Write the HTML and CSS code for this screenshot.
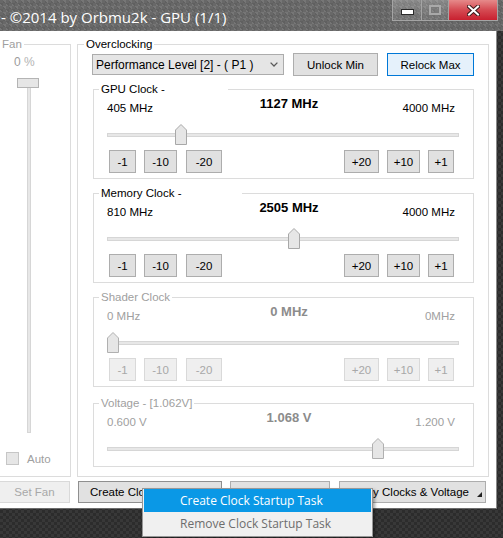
FILE: index.html
```html
<!DOCTYPE html>
<html>
<head>
<meta charset="utf-8">
<link rel="stylesheet" href="styles.css">
</head>
<body>
<div class="window">
  <div class="titlebar">
    <div class="title">- ©2014 by Orbmu2k - GPU (1/1)</div>
    <div class="caps">
      <div class="cap cap-min"><svg width="13" height="6" viewBox="0 0 13 6"><rect x="0.5" y="0.5" width="12" height="5" fill="#fff" stroke="#2a2a2a"/></svg></div>
      <div class="cap cap-max"><svg width="12" height="10" viewBox="0 0 12 10"><rect x="1" y="1" width="10" height="8" fill="none" stroke="#a9a9a9" stroke-width="2"/><rect x="2.5" y="2.5" width="7" height="5" fill="none" stroke="#7a7a7a" stroke-width="1"/></svg></div>
      <div class="cap cap-close"><svg width="13" height="11" viewBox="0 0 13 11"><path d="M2 1.5 L11 9.5 M11 1.5 L2 9.5" stroke="#3a1a1a" stroke-width="4" stroke-linecap="square"/><path d="M2 1.5 L11 9.5 M11 1.5 L2 9.5" stroke="#fff" stroke-width="2" stroke-linecap="square"/></svg></div>
    </div>
  </div>
  <div class="client">
    <div class="main">
      <fieldset class="group fan disabled">
        <legend class="lg-fan">Fan</legend>
        <div class="fan-body">
          <div class="fan-pct">0 <span class="pct">%</span></div>
          <div class="vslider">
            <div class="vtrack"></div>
            <div class="vthumb"></div>
          </div>
          <div class="auto-row">
            <span class="checkbox"></span>
            <span class="auto-label">Auto</span>
          </div>
        </div>
      </fieldset>
      <fieldset class="group oc">
        <legend class="lg-oc">Overclocking</legend>
        <div class="oc-body">
          <div class="toprow">
            <div class="select">
              <span class="select-text">Performance Level [2] - ( P1 )</span>
              <svg class="chev" width="8" height="5" viewBox="0 0 8 5"><path d="M0.6 0.6 L4 4 L7.4 0.6" stroke="#5a5a5a" fill="none" stroke-width="1.3"/></svg>
            </div>
            <button class="btn btn-unlock">Unlock Min</button>
            <button class="btn btn-relock">Relock Max</button>
          </div>

          <fieldset class="group clock first">
            <legend class="lg-gpu">GPU Clock -</legend>
            <div class="clock-body">
              <div class="values">
                <span class="val-min">405 MHz</span>
                <span class="val-cur">1127 MHz</span>
                <span class="val-max">4000 MHz</span>
              </div>
              <div class="slider">
                <div class="track"></div>
                <div class="rail"><svg class="thumb" style="left:20.08%" width="12" height="21" viewBox="0 0 12 21"><path d="M0.5 20.5 V6 L6 0.5 L11.5 6 V20.5 Z" fill="#e6e6e6" stroke="#a8a8a8"/></svg></div>
              </div>
              <div class="btnrow">
                <button class="btn b-m1">-1</button>
                <button class="btn b-m10">-10</button>
                <button class="btn b-m20">-20</button>
                <button class="btn b-p20">+20</button>
                <button class="btn b-p10">+10</button>
                <button class="btn b-p1">+1</button>
              </div>
            </div>
          </fieldset>

          <fieldset class="group clock">
            <legend class="lg-mem">Memory Clock -</legend>
            <div class="clock-body">
              <div class="values">
                <span class="val-min">810 MHz</span>
                <span class="val-cur">2505 MHz</span>
                <span class="val-max">4000 MHz</span>
              </div>
              <div class="slider">
                <div class="track"></div>
                <div class="rail"><svg class="thumb" style="left:53.13%" width="12" height="21" viewBox="0 0 12 21"><path d="M0.5 20.5 V6 L6 0.5 L11.5 6 V20.5 Z" fill="#e6e6e6" stroke="#a8a8a8"/></svg></div>
              </div>
              <div class="btnrow">
                <button class="btn b-m1">-1</button>
                <button class="btn b-m10">-10</button>
                <button class="btn b-m20">-20</button>
                <button class="btn b-p20">+20</button>
                <button class="btn b-p10">+10</button>
                <button class="btn b-p1">+1</button>
              </div>
            </div>
          </fieldset>

          <fieldset class="group clock disabled">
            <legend class="lg-shader">Shader Clock</legend>
            <div class="clock-body">
              <div class="values">
                <span class="val-min">0 MHz</span>
                <span class="val-cur">0 MHz</span>
                <span class="val-max">0MHz</span>
              </div>
              <div class="slider">
                <div class="track"></div>
                <div class="rail"><svg class="thumb" style="left:0%" width="12" height="21" viewBox="0 0 12 21"><path d="M0.5 20.5 V6 L6 0.5 L11.5 6 V20.5 Z" fill="#e6e6e6" stroke="#b0b0b0"/></svg></div>
              </div>
              <div class="btnrow">
                <button class="btn b-m1">-1</button>
                <button class="btn b-m10">-10</button>
                <button class="btn b-m20">-20</button>
                <button class="btn b-p20">+20</button>
                <button class="btn b-p10">+10</button>
                <button class="btn b-p1">+1</button>
              </div>
            </div>
          </fieldset>

          <fieldset class="group clock voltage disabled">
            <legend class="lg-volt">Voltage - [1.062V]</legend>
            <div class="clock-body">
              <div class="values">
                <span class="val-min">0.600 V</span>
                <span class="val-cur">1.068 V</span>
                <span class="val-max">1.200 V</span>
              </div>
              <div class="slider">
                <div class="track"></div>
                <div class="rail"><svg class="thumb" style="left:78%" width="12" height="21" viewBox="0 0 12 21"><path d="M0.5 20.5 V6 L6 0.5 L11.5 6 V20.5 Z" fill="#e6e6e6" stroke="#b0b0b0"/></svg></div>
              </div>
            </div>
          </fieldset>
        </div>
      </fieldset>
    </div>
    <div class="actions">
      <button class="btn act-fan" disabled>Set Fan</button>
      <button class="btn act-create">Create Clocks Shortcut</button>
      <button class="btn act-mid">Restore Defaults</button>
      <button class="btn act-apply"><span>Apply Clocks &amp; Voltage</span><svg class="grip" width="5" height="5" viewBox="0 0 5 5"><path d="M5 0 V5 H0 Z" fill="#222"/></svg></button>
    </div>
  </div>
</div>
<div class="menu">
  <div class="menu-item active">Create Clock Startup Task</div>
  <div class="menu-item">Remove Clock Startup Task</div>
</div>
</body>
</html>
```

FILE: styles.css
```css
* { box-sizing: border-box; }
html, body { margin: 0; padding: 0; }
body {
  width: 503px;
  height: 538px;
  overflow: hidden;
  position: relative;
  font-family: "Liberation Sans", Arial, sans-serif;
  font-size: 11.5px;
  color: #000;
  background-color: #2c2c2c;
  background-image:
    linear-gradient(45deg, rgba(255,255,255,.06) 25%, transparent 25%, transparent 75%, rgba(255,255,255,.06) 75%),
    linear-gradient(45deg, rgba(255,255,255,.06) 25%, transparent 25%, transparent 75%, rgba(255,255,255,.06) 75%);
  background-size: 6px 6px;
  background-position: 0 0, 3px 3px;
}

/* title bar */
.titlebar {
  height: 31px;
  display: flex;
  align-items: flex-start;
  background-color: #686868;
  background-image:
    linear-gradient(45deg, rgba(255,255,255,.09) 25%, transparent 25%, transparent 75%, rgba(255,255,255,.09) 75%),
    linear-gradient(45deg, rgba(0,0,0,.08) 25%, transparent 25%, transparent 75%, rgba(0,0,0,.08) 75%);
  background-size: 6px 6px;
  background-position: 0 0, 3px 3px;
}
.title {
  font-family: "Open Sans", "Noto Sans", sans-serif;
  font-size: 15px;
  line-height: 20px;
  color: #fff;
  padding: 7px 0 0 1px;
  white-space: nowrap;
}
.caps {
  margin-left: auto;
  margin-right: 5px;
  display: flex;
  height: 21px;
  border: 1px solid #a4a4a4;
  border-top: 0;
}
.cap {
  height: 20px;
  display: flex;
  align-items: center;
  justify-content: center;
}
.cap-min {
  width: 29px;
  background: linear-gradient(rgba(255,255,255,.22), rgba(255,255,255,.06));
  border-right: 1px solid #a4a4a4;
  padding-top: 3px;
}
.cap-max {
  width: 27px;
  background: linear-gradient(rgba(255,255,255,.22), rgba(255,255,255,.06));
  border-right: 1px solid #a4a4a4;
}
.cap-close {
  width: 48px;
  background: linear-gradient(#e68a8a, #d54a52 50%, #c8202f);
}

/* client area */
.client {
  width: 497px;
  background: #fff;
  border-right: 1px solid #8a8a8a;
  border-bottom: 1px solid #6c6c6c;
  padding: 7px 0 5px 0;
}
.main {
  display: flex;
  gap: 6px;
  align-items: stretch;
}
fieldset.group {
  margin: 0;
  padding: 0;
  border: 1px solid #dcdcdc;
  min-width: 0;
}
legend {
  padding: 0 2px;
  margin-left: 5px;
  line-height: 13px;
  font-size: 11.5px;
}
.disabled, .disabled legend { color: #a0a0a0; }

/* fan */
fieldset.fan { margin-left: -6px; width: 77px; }
.fan-pct {
  margin-top: 5px;
  padding-left: 19px;
  line-height: 13px;
  font-size: 12px;
  color: #9c9c9c;
}
.pct { color: #b4b4b4; }
.vslider {
  position: relative;
  margin: 9px 0 0 22px;
  padding-top: 2px;
  width: 22px;
  height: 355px;
}
.vtrack {
  margin-left: 10px;
  width: 4px;
  height: 353px;
  background: #e7e7e7;
  border: 1px solid #d6d6d6;
}
.vthumb {
  position: absolute;
  left: 0;
  top: 0;
  width: 22px;
  height: 10px;
  background: #e6e6e6;
  border: 1px solid #b4b4b4;
}
.auto-row {
  display: flex;
  align-items: center;
  margin: 19px 0 0 11px;
  height: 13px;
}
.checkbox {
  width: 13px;
  height: 13px;
  background: #e6e6e6;
  border: 1px solid #c6c6c6;
}
.auto-label { margin-left: 8px; }

/* overclocking */
fieldset.oc { width: 412px; }
.lg-oc { margin-left: 6px; }
.oc-body { padding: 2px 14px 9px 15px; }
.toprow {
  display: flex;
  align-items: center;
  height: 23px;
}
.select {
  margin-left: -1px;
  width: 192px;
  height: 21px;
  display: flex;
  align-items: center;
  padding: 0 5px 0 3px;
  background: #e5e5e5;
  border: 1px solid #acacac;
  font-size: 12px;
}
.select-text { flex: 1; white-space: nowrap; }
.chev { margin-bottom: 1px; }

.btn {
  font-family: "Liberation Sans", Arial, sans-serif;
  font-size: 11.5px;
  color: #000;
  background: #e1e1e1;
  border: 1px solid #adadad;
  padding: 0;
  margin: 0;
  height: 23px;
  white-space: nowrap;
  overflow: hidden;
}
.btn-unlock { margin-left: 9px; width: 85px; }
.btn-relock {
  margin-left: 9px;
  width: 87px;
  background: #e5f1fb;
  border-color: #0078d7;
}

fieldset.clock { margin-top: 8px; }
fieldset.clock.first { margin-top: 7px; }
fieldset.clock.voltage { margin-top: 10px; }
.lg-gpu { width: 129px; }
.lg-mem { width: 143px; }
.clock-body { padding: 0 14px 5px 13px; }
.voltage .clock-body { padding-bottom: 6px; }
.values {
  display: grid;
  grid-template-columns: 122px 120px 1fr;
  height: 22px;
  padding-right: 4px;
}
.val-min, .val-max { padding-top: 6px; line-height: 13px; white-space: nowrap; }
.val-max { text-align: right; }
.val-cur {
  text-align: center;
  font-weight: bold;
  font-size: 13px;
  line-height: 14px;
  padding-top: 1px;
  white-space: nowrap;
}
.disabled .val-cur { color: #8c8c8c; }
.slider {
  position: relative;
  height: 24px;
  margin-top: 4px;
  padding-top: 11px;
}
.track {
  height: 4px;
  background: #e7e7e7;
  border: 1px solid #d6d6d6;
}
.rail {
  position: absolute;
  left: 6px;
  right: 6px;
  top: 2px;
  height: 21px;
}
.thumb {
  position: absolute;
  top: 0;
  margin-left: -6px;
  display: block;
}
.btnrow {
  display: flex;
  margin-top: 4px;
  padding: 0 5px 0 2px;
}
.b-m1 { width: 27px; }
.b-m10 { width: 33px; margin-left: 8px; }
.b-m20 { width: 36px; margin-left: 9px; }
.b-p20 { width: 35px; margin-left: auto; }
.b-p10 { width: 33px; margin-left: 8px; }
.b-p1 { width: 26px; margin-left: 8px; }
.disabled .btn {
  color: #a8a8a8;
  background: #efefef;
  border-color: #d9d9d9;
}

/* bottom buttons */
.actions {
  display: flex;
  margin: 4px 0 0 -1px;
  height: 22px;
}
.actions .btn { height: 22px; }
.act-fan {
  width: 71px;
  color: #a8a8a8;
  background: #efefef;
  border-color: #d9d9d9;
}
.act-create {
  margin-left: 8px;
  width: 144px;
  text-align: left;
  padding-left: 11px;
  border-color: #8f8f8f;
}
.act-mid { margin-left: 8px; width: 100px; }
.act-apply {
  margin-left: 9px;
  width: 147px;
  display: flex;
  align-items: center;
  justify-content: flex-end;
  padding-right: 3px;
}
.grip { margin-left: 8px; align-self: flex-end; margin-bottom: 5px; }

/* context menu */
.menu {
  position: absolute;
  left: 142px;
  top: 488px;
  width: 231px;
  background: #f0f0f0;
  border: 1px solid #979797;
  padding: 0 1px 1px 1px;
  box-shadow: 2px 2px 3px rgba(0,0,0,.35);
  font-family: "Open Sans", "Noto Sans", sans-serif;
  font-size: 12px;
}
.menu-item {
  height: 23px;
  line-height: 23px;
  padding-left: 36px;
  color: #6d6d6d;
  white-space: nowrap;
}
.menu-item.active {
  background: #0a98e6;
  color: #fff;
}
```
